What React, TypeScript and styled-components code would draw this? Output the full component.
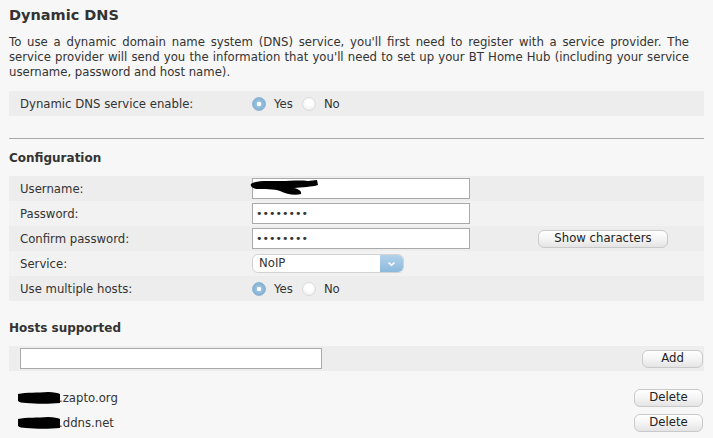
import React from 'react';
import styled, {createGlobalStyle} from "styled-components";

const GlobalStyle = createGlobalStyle`
  body {
    margin: 0;
    background: #f7f7f7;
    font-family: "DejaVu Sans", Verdana, sans-serif;
    font-size: 11.7px;
    color: #333333;
  }
`

const hosts = [
  {name: ".zapto.org"},
  {name: ".ddns.net"},
]

const introLines = [
  "To use a dynamic domain name system (DNS) service, you'll first need to register with a service provider. The",
  "service provider will send you the information that you'll need to set up your BT Home Hub (including your service",
  "username, password and host name).",
]

const Radio = ({checked, label}: { checked: boolean, label: string }) => (
  <RadioLabel>
    <RadioDot checked={checked}/>
    {label}
  </RadioLabel>
)

// redacted bits of the original screenshot
const Scribble = ({wide}: { wide?: boolean }) => (
  wide ? (
    <ScribbleSvg width="70" height="18" viewBox="0 0 70 18">
      <path d="M1 5 C6 1, 18 2, 30 2 C40 2, 50 1, 58 2 L67 1 L68 6 C62 8, 52 8, 44 9 C48 10, 52 12, 51 15 C45 17, 36 15, 30 12 C24 10, 14 10, 6 10 C2 9, 0 7, 1 5 Z"
            fill="#000"/>
    </ScribbleSvg>
  ) : (
    <BlobSvg width="42" height="12" viewBox="0 0 42 12">
      <path d="M0 2 C8 0, 20 1, 30 0 C36 0, 40 1, 42 2 L42 11 C32 12, 18 12, 8 11 C4 11, 1 10, 0 9 Z" fill="#000"/>
    </BlobSvg>
  )
)

const App = () => {
  return (
    <Page>
      <GlobalStyle/>
      <Title>Dynamic DNS</Title>
      <Intro>
        {introLines.map((line, i) => (
          <IntroLine key={i} last={i === introLines.length - 1}>{line}</IntroLine>
        ))}
      </Intro>

      <Row shade="dark">
        <Label>Dynamic DNS service enable:</Label>
        <Control>
          <Radio checked label="Yes"/>
          <Radio checked={false} label="No"/>
        </Control>
      </Row>

      <Divider/>

      <Heading>Configuration</Heading>
      <Rows>
        <Row shade="dark">
          <Label>Username:</Label>
          <Control>
            <FieldWrap>
              <TextInput type="text" defaultValue="" readOnly/>
              <Scribble wide/>
            </FieldWrap>
          </Control>
        </Row>
        <Row shade="light">
          <Label>Password:</Label>
          <Control>
            <TextInput type="password" defaultValue="password" readOnly/>
          </Control>
        </Row>
        <Row shade="dark">
          <Label>Confirm password:</Label>
          <Control>
            <TextInput type="password" defaultValue="password" readOnly/>
          </Control>
          <Extra>
            <Button width={130}>Show characters</Button>
          </Extra>
        </Row>
        <Row shade="light">
          <Label>Service:</Label>
          <Control>
            <Select>
              <SelectValue>NoIP</SelectValue>
              <SelectArrow>
                <svg width="9" height="6" viewBox="0 0 9 6">
                  <path d="M1.5 1.5 L4.5 4.2 L7.5 1.5" fill="none" stroke="#fff" strokeWidth="1.6"/>
                </svg>
              </SelectArrow>
            </Select>
          </Control>
        </Row>
        <Row shade="dark">
          <Label>Use multiple hosts:</Label>
          <Control>
            <Radio checked label="Yes"/>
            <Radio checked={false} label="No"/>
          </Control>
        </Row>
      </Rows>

      <Heading2>Hosts supported</Heading2>
      <HostBar>
        <HostInput type="text" readOnly/>
        <Button width={61}>Add</Button>
      </HostBar>

      <HostList>
        {hosts.map((h) => (
          <HostItem key={h.name}>
            <HostName>
              <Scribble/>
              {h.name}
            </HostName>
            <Button width={69}>Delete</Button>
          </HostItem>
        ))}
      </HostList>
    </Page>
  );
};

const Page = styled.div`
  padding: 5px 9px 0 9px;
  width: 695px;
`

const Title = styled.div`
  font-size: 14.5px;
  font-weight: bold;
  line-height: 20px;
  color: #333;
`

const Intro = styled.div`
  margin: 10px 0 11px 0;
  line-height: 15px;
`

const IntroLine = styled.div<{ last: boolean }>`
  width: 680px;
  white-space: nowrap;
  text-align: justify;
  text-align-last: ${(props) => (props.last ? "left" : "justify")};
`

const Row = styled.div<{ shade: string }>`
  display: flex;
  align-items: center;
  height: 25px;
  background: ${(props) => (props.shade === "dark" ? "#ededed" : "#f2f2f2")};
`

const Rows = styled.div`
  display: flex;
  flex-direction: column;
`

const Label = styled.div`
  width: 232px;
  padding-left: 11px;
  flex-shrink: 0;
`

const Control = styled.div`
  display: flex;
  align-items: center;
  width: 286px;
  flex-shrink: 0;
`

const Extra = styled.div`
  display: flex;
  align-items: center;
`

const Divider = styled.div`
  height: 1px;
  background: #a8a8a8;
  margin: 22px 0 0 0;
`

const Heading = styled.div`
  font-weight: bold;
  font-size: 12px;
  line-height: 16px;
  margin: 11px 0 10px 0;
`

const Heading2 = styled(Heading)`
  margin: 19px 0 10px 0;
`

const RadioLabel = styled.label`
  display: flex;
  align-items: center;
  margin-right: 9px;
  color: #333;
`

const RadioDot = styled.span<{ checked: boolean }>`
  display: inline-block;
  box-sizing: border-box;
  width: 14px;
  height: 14px;
  border-radius: 50%;
  margin-right: 8px;
  border: 1px solid ${(props) => (props.checked ? "#8fb6d4" : "#dcdcdc")};
  background: ${(props) => (props.checked
    ? "radial-gradient(circle, #ffffff 0 2px, #9cc3e0 2.5px, #6fa3cb 100%)"
    : "radial-gradient(circle at 50% 40%, #ffffff 0 3px, #e8e8e8 100%)")};
`

const FieldWrap = styled.div`
  position: relative;
  display: flex;
`

const TextInput = styled.input`
  box-sizing: border-box;
  width: 218px;
  height: 21px;
  margin: 0;
  padding: 0 3px;
  border: 1px solid #a9a9a9;
  background: #fff;
  font-family: "DejaVu Sans", Verdana, sans-serif;
  font-size: 11px;
  color: #333;
  outline: none;
`

const ScribbleSvg = styled.svg`
  position: absolute;
  left: -2px;
  top: 1px;
`

const BlobSvg = styled.svg`
  margin-right: -1px;
`

const Select = styled.div`
  display: flex;
  box-sizing: border-box;
  width: 152px;
  height: 19px;
  border: 1px solid #d2d2d2;
  border-radius: 6px;
  background: #fff;
  overflow: hidden;
`

const SelectValue = styled.div`
  flex: 1;
  padding-left: 6px;
  line-height: 17px;
  color: #333;
`

const SelectArrow = styled.div`
  display: flex;
  align-items: center;
  justify-content: center;
  width: 23px;
  background: linear-gradient(#b3d2ea, #8cb9dc);
`

const Button = styled.button<{ width: number }>`
  box-sizing: border-box;
  width: ${(props) => props.width}px;
  height: 18px;
  padding: 0;
  border: 1px solid #c9c9c9;
  border-radius: 6px;
  background: linear-gradient(#ffffff 0%, #f4f4f4 50%, #e4e4e4 100%);
  font-family: "DejaVu Sans", Verdana, sans-serif;
  font-size: 11.7px;
  color: #222;
  line-height: 15px;
`

const HostBar = styled.div`
  display: flex;
  align-items: center;
  justify-content: space-between;
  height: 25px;
  padding: 0 1px 0 11px;
  background: #ededed;
`

const HostInput = styled(TextInput)`
  width: 302px;
`

const HostList = styled.div`
  display: flex;
  flex-direction: column;
  margin-top: 14px;
`

const HostItem = styled.div`
  display: flex;
  align-items: center;
  justify-content: space-between;
  height: 25px;
  padding: 0 1px 0 9px;
`

const HostName = styled.div`
  display: flex;
  align-items: center;
  color: #333;
`

export default App;
